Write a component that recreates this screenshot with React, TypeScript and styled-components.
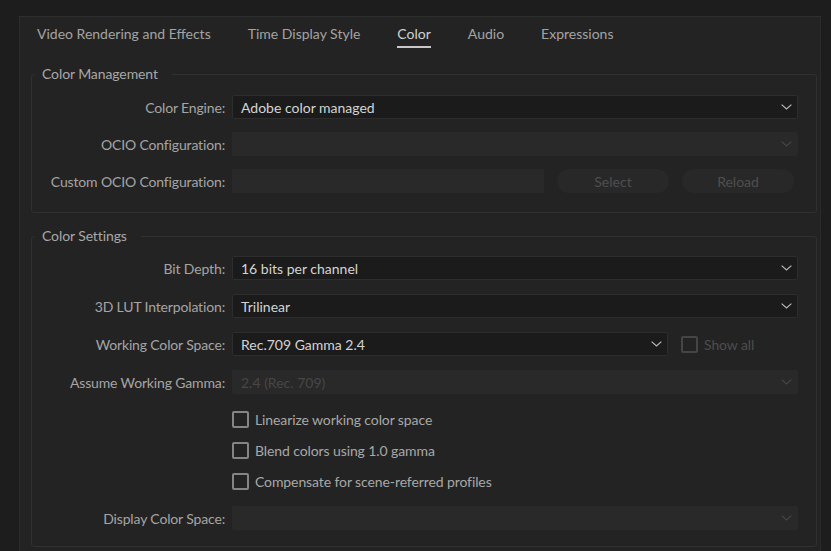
import styled, { createGlobalStyle } from "styled-components";

const GlobalStyle = createGlobalStyle`
  html, body {
    margin: 0;
    padding: 0;
    background: #1d1d1d;
  }
  body {
    font-family: Lato, "Noto Sans", sans-serif;
    font-size: 14px;
    color: #a5a5a5;
  }
`;

const tabs = [
  "Video Rendering and Effects",
  "Time Display Style",
  "Color",
  "Audio",
  "Expressions",
];

const Chevron = ({ dim }: { dim?: boolean }) => (
  <svg width="11" height="6" viewBox="0 0 11 6">
    <polyline
      points="0.6,0.6 5.5,5 10.4,0.6"
      fill="none"
      stroke={dim ? "#454545" : "#b8b8b8"}
      strokeWidth="1.2"
    />
  </svg>
);

const App = () => {
  return (
    <>
      <GlobalStyle />
      <Page>
        <Panel>
          <TabBar>
            {tabs.map((t) => (
              <Tab key={t} active={t === "Color"}>
                {t}
              </Tab>
            ))}
          </TabBar>

          <Group top={14} padTop={11} padBottom={19}>
            <Legend>Color Management</Legend>
            <Rows gap={13}>
              <Row>
                <Label>Color Engine:</Label>
                <Select>
                  <span>Adobe color managed</span>
                  <Chevron />
                </Select>
              </Row>
              <Row>
                <Label>OCIO Configuration:</Label>
                <Select disabled>
                  <span />
                  <Chevron dim />
                </Select>
              </Row>
              <Row>
                <Label>Custom OCIO Configuration:</Label>
                <Controls>
                  <TextField />
                  <PillButton>Select</PillButton>
                  <PillButton>Reload</PillButton>
                </Controls>
              </Row>
            </Rows>
          </Group>

          <Group top={13} padTop={10} padBottom={16}>
            <Legend>Color Settings</Legend>
            <Rows gap={14}>
              <Row>
                <Label>Bit Depth:</Label>
                <Select>
                  <span>16 bits per channel</span>
                  <Chevron />
                </Select>
              </Row>
              <Row>
                <Label>3D LUT Interpolation:</Label>
                <Select>
                  <span>Trilinear</span>
                  <Chevron />
                </Select>
              </Row>
              <Row>
                <Label>Working Color Space:</Label>
                <Controls>
                  <Select width="436px">
                    <span>Rec.709 Gamma 2.4</span>
                    <Chevron />
                  </Select>
                  <Check disabled>
                    <Box disabled />
                    Show all
                  </Check>
                </Controls>
              </Row>
              <Row>
                <Label>Assume Working Gamma:</Label>
                <Select disabled>
                  <span>2.4 (Rec. 709)</span>
                  <Chevron dim />
                </Select>
              </Row>
              <CheckList>
                <Check>
                  <Box />
                  Linearize working color space
                </Check>
                <Check>
                  <Box />
                  Blend colors using 1.0 gamma
                </Check>
                <Check>
                  <Box />
                  Compensate for scene-referred profiles
                </Check>
              </CheckList>
              <Row>
                <Label>Display Color Space:</Label>
                <Select disabled>
                  <span />
                  <Chevron dim />
                </Select>
              </Row>
            </Rows>
          </Group>
        </Panel>
      </Page>
    </>
  );
};

export default App;

const Page = styled.div`
  padding: 16px 10px 0 19px;
  height: 535px;
  overflow: hidden;
`;

const Panel = styled.div`
  width: 802px;
  height: 560px;
  background: #232323;
  border-top: 1px solid #2e2e2e;
  border-left: 1px solid #2e2e2e;
  border-right: 1px solid #2a2a2a;
  box-sizing: border-box;
`;

const TabBar = styled.div`
  display: flex;
  gap: 37px;
  padding: 7px 0 0 17px;
  height: 33px;
  box-sizing: border-box;
`;

const Tab = styled.div<{ active?: boolean }>`
  font-size: 14px;
  line-height: 20px;
  height: 24px;
  color: ${({ active }) => (active ? "#d2d2d2" : "#a3a3a3")};
  border-bottom: 2px solid ${({ active }) => (active ? "#c8c8c8" : "transparent")};
  box-sizing: border-box;
`;

const Group = styled.fieldset<{ top: number; padTop: number; padBottom: number }>`
  margin: ${({ top }) => top}px 0 0 11px;
  width: 786px;
  box-sizing: border-box;
  border: 1px solid #303030;
  border-radius: 3px;
  padding: ${({ padTop, padBottom }) => `${padTop}px 18px ${padBottom}px 0`};
`;

const Legend = styled.legend`
  margin-left: 3px;
  padding: 0 14px 0 7px;
  font-size: 14px;
  letter-spacing: -0.1px;
  line-height: 20px;
  color: #a8a8a8;
`;

const Rows = styled.div<{ gap: number }>`
  display: flex;
  flex-direction: column;
  gap: ${({ gap }) => gap}px;
`;

const Row = styled.div`
  display: grid;
  grid-template-columns: 193px 1fr;
  column-gap: 7px;
  align-items: center;
  height: 24px;
`;

const Label = styled.div`
  text-align: right;
  font-size: 14px;
  letter-spacing: -0.15px;
  color: #a5a5a5;
  white-space: nowrap;
`;

const Controls = styled.div`
  display: flex;
  align-items: center;
  gap: 13px;
`;

const Select = styled.div<{ disabled?: boolean; width?: string }>`
  display: flex;
  align-items: center;
  justify-content: space-between;
  height: 24px;
  width: ${({ width }) => width || "auto"};
  box-sizing: border-box;
  padding: 0 5px 0 8px;
  border-radius: 2px;
  font-size: 14px;
  background: ${({ disabled }) => (disabled ? "#292929" : "#1b1b1b")};
  border: 1px solid ${({ disabled }) => (disabled ? "#292929" : "#2d2d2d")};
  color: ${({ disabled }) => (disabled ? "#474747" : "#d4d4d4")};
`;

const TextField = styled.div`
  width: 312px;
  height: 24px;
  background: #292929;
  border-radius: 1px;
`;

const PillButton = styled.div`
  width: 112px;
  height: 24px;
  border-radius: 12px;
  background: #282828;
  color: #4f4f4f;
  font-size: 14px;
  display: flex;
  align-items: center;
  justify-content: center;
`;

const CheckList = styled.div`
  display: flex;
  flex-direction: column;
  gap: 7px;
  padding-left: 200px;
  margin: -1px 0 -1px;
`;

const Check = styled.div<{ disabled?: boolean }>`
  display: flex;
  align-items: center;
  gap: 6px;
  height: 24px;
  font-size: 14px;
  letter-spacing: -0.1px;
  color: ${({ disabled }) => (disabled ? "#4d4d4d" : "#a8a8a8")};
`;

const Box = styled.span<{ disabled?: boolean }>`
  width: 17px;
  height: 17px;
  box-sizing: border-box;
  border: 2px solid ${({ disabled }) => (disabled ? "#454545" : "#858585")};
  border-radius: 2px;
`;
